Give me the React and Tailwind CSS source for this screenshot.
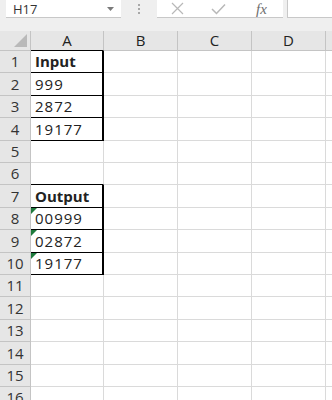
import React from 'react';

// Excel-like sheet: name box + formula bar, then a small grid with two bordered blocks.
const ROWS = [
  { n: 1, h: 'h-[22px]', a: 'Input', bold: true, box: true },
  { n: 2, h: 'h-[23px]', a: '999', box: true },
  { n: 3, h: 'h-[22px]', a: '2872', box: true },
  { n: 4, h: 'h-[23px]', a: '19177', box: true },
  { n: 5, h: 'h-[22px]' },
  { n: 6, h: 'h-[22px]', above: true },
  { n: 7, h: 'h-[23px]', a: 'Output', bold: true, box: true },
  { n: 8, h: 'h-[22px]', a: '00999', box: true, flag: true },
  { n: 9, h: 'h-[23px]', a: '02872', box: true, flag: true },
  { n: 10, h: 'h-[22px]', a: '19177', box: true, flag: true },
  { n: 11, h: 'h-[22px]' },
  { n: 12, h: 'h-[23px]' },
  { n: 13, h: 'h-[22px]' },
  { n: 14, h: 'h-[23px]' },
  { n: 15, h: 'h-[22px]' },
  { n: 16, h: 'h-[22px]' },
];

const COLS = ['A', 'B', 'C', 'D'];
const grid = 'grid grid-cols-[31px_73px_74px_74px_74px_1fr]';

export default function App() {
  return (
    <div className="h-[400px] w-[332px] overflow-hidden bg-white text-[#222]" style={{ fontFamily: '"Open Sans", "Noto Sans", sans-serif' }}>
      {/* barra de formulas */}
      <div className="h-[32px] bg-[#efefef]">
        <div className="flex h-[18px] items-stretch">
          <div className="ml-[6px] flex w-[115px] items-center justify-between border-b border-[#c8c8c8] bg-white pl-[7px] pr-[7px]">
            <span className="text-[13px] leading-[16px] text-[#333]">H17</span>
            <svg width="7" height="4" viewBox="0 0 7 4"><path d="M0 0h7L3.5 4z" fill="#7a7a7a" /></svg>
          </div>
          <div className="flex w-[36px] flex-col items-center justify-center gap-[2px]">
            <span className="h-[2px] w-[2px] bg-[#a8a8a8]" />
            <span className="h-[2px] w-[2px] bg-[#a8a8a8]" />
            <span className="h-[2px] w-[2px] bg-[#a8a8a8]" />
          </div>
          <div className="flex w-[126px] items-center border-b border-[#c8c8c8] bg-white">
            <svg className="ml-[14px]" width="13" height="13" viewBox="0 0 13 13">
              <path d="M1 1l11 11M12 1L1 12" stroke="#b8b8b8" strokeWidth="1.2" fill="none" />
            </svg>
            <svg className="ml-[27px]" width="15" height="12" viewBox="0 0 15 12">
              <path d="M1 6l4.5 4.5L14 1.5" stroke="#b8b8b8" strokeWidth="1.5" fill="none" />
            </svg>
            <span className="ml-[30px] text-[15px] italic leading-[16px] text-[#6e6e6e]" style={{ fontFamily: '"Liberation Serif", serif' }}>fx</span>
          </div>
          <div className="ml-[4px] flex-1 border-b border-l border-[#c8c8c8] bg-white" />
        </div>
      </div>

      {/* cabecera de columnas */}
      <div className={`${grid} -mt-px h-[20px] bg-[#e6e6e6]`}>
        <div className="relative border-r border-b border-[#c4c4c4]">
          <svg className="absolute bottom-[3px] right-[3px]" width="13" height="13" viewBox="0 0 13 13">
            <path d="M13 0V13H0z" fill="#b9b9b9" />
          </svg>
        </div>
        {COLS.map(c => (
          <div
            key={c}
            className={`flex items-center justify-center border-r border-b border-[#c4c4c4] text-[15px] leading-none text-[#222] ${c === 'A' ? 'border-b-black' : ''}`}
          >
            {c}
          </div>
        ))}
        <div className="border-b border-[#c4c4c4]" />
      </div>

      {/* filas */}
      {ROWS.map(r => (
        <div key={r.n} className={`${grid} ${r.h}`}>
          <div className="flex items-end justify-center border-r border-b border-[#c4c4c4] bg-[#e6e6e6] pb-[2px] text-[15px] leading-[18px] text-[#333]">{r.n}</div>
          <div
            className={`relative flex items-end pl-[4px] pb-[2px] text-[15px] leading-[18px]
              ${r.box ? 'border-b border-r-2 border-b-black border-r-black' : 'border-r border-b border-[#dadada]'}
              ${r.above ? 'border-b-black' : ''}
              ${r.bold ? 'font-bold tracking-[0px]' : 'tracking-[1px]'}`}
          >
            {r.flag && <span className="absolute left-0 top-0 h-0 w-0 border-t-[6px] border-r-[6px] border-t-[#1e7a3c] border-r-transparent" />}
            {r.a}
          </div>
          <div className="border-r border-b border-[#dadada]" />
          <div className="border-r border-b border-[#dadada]" />
          <div className="border-r border-b border-[#dadada]" />
          <div className="border-b border-[#dadada]" />
        </div>
      ))}
    </div>
  );
}
